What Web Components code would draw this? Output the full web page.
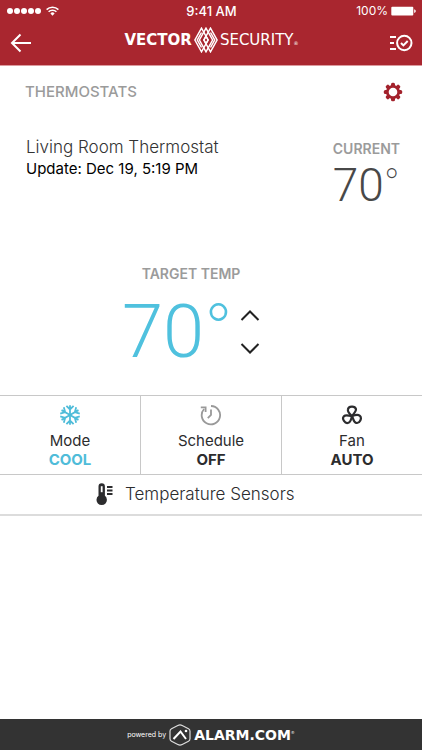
<!DOCTYPE html>
<html lang="en">
<head>
<meta charset="utf-8">
<meta name="viewport" content="width=device-width, initial-scale=1">
<title>Thermostats</title>
<style>
body { margin: 0; background: #fff; color: #2c2c2e; font-family: Inter, "Liberation Sans", sans-serif; }
</style>
</head>
<body>
<thermostat-app></thermostat-app>
<script>
const RESET = `
  :host, *, *::before, *::after { box-sizing: border-box; }
  svg { display: block; flex: none; }
  button, a { font: inherit; color: inherit; background: none; border: 0; padding: 0; margin: 0; text-decoration: none; cursor: pointer; }
`;
function define(name, html) {
  const template = document.createElement('template');
  template.innerHTML = html;
  customElements.define(name, class extends HTMLElement {
    constructor() {
      super();
      this.attachShadow({ mode: 'open' }).append(template.content.cloneNode(true));
    }
  });
}

define('status-bar', `
<style>${RESET}
  :host { display: grid; grid-template-columns: 1fr auto 1fr; align-items: center; height: 22px; padding: 0 6px 0 7px; color: #fff; font-size: 12px; line-height: 16px; }
  .side { display: flex; align-items: center; gap: 4px; }
  .right { justify-content: flex-end; gap: 3px; }
  b { font-size: 13px; font-weight: 500; }
</style>
<div class="side">
  <svg width="35" height="8" viewBox="0 0 35 8" fill="#fff"><circle cx="3" cy="4" r="3"/><circle cx="10" cy="4" r="3"/><circle cx="17" cy="4" r="3"/><circle cx="24" cy="4" r="3"/><circle cx="31" cy="4" r="3"/></svg>
  <svg width="13" height="10" viewBox="0 0 13 10" fill="none" stroke="#fff" stroke-width="1.5"><path d="M.6 3.6a8.3 8.3 0 0 1 11.8 0M2.6 5.8a5.5 5.5 0 0 1 7.8 0"/><path d="M4.4 7.4a3 3 0 0 1 4.2 0L6.5 9.7z" fill="#fff" stroke="none"/></svg>
</div>
<b>9:41 AM</b>
<div class="side right"><span>100%</span>
  <svg width="25" height="10" viewBox="0 0 25 10" fill="#fff"><rect x=".3" y=".8" width="22" height="8.6" rx="1"/><path d="M23.2 3.2q1.6.4 1.6 1.9t-1.6 1.9z"/></svg>
</div>`);

define('brand-logo', `
<style>${RESET}
  :host { display: flex; align-items: center; gap: 1px; color: #fff; font: 15px/16px "DejaVu Sans", sans-serif; white-space: nowrap; }
  b { font-weight: 700; }
  sup { font-size: 5px; line-height: 5px; vertical-align: baseline; }
</style>
<b>VECTOR</b>
<svg width="26" height="26" viewBox="0 0 26 26" fill="none" stroke="#fff" stroke-width="1.5"><path d="M8.5 1.2 1.9 13l6.6 11.800L15.100 13z"/><path d="M13 1.2 6.400 13 13 24.800 19.600 13z"/><path d="M17.500 1.200 10.900 13l6.600 11.800L24.100 13z"/><path d="M8.500 5.500 4.300 13l4.200 7.500M17.500 5.500l4.200 7.500-4.200 7.500M13 9.200 10.900 13l2.100 3.800 2.100-3.800z"/></svg>
<span>SECURITY<sup>®</sup></span>`);

define('nav-bar', `
<style>${RESET}
  :host { display: grid; grid-template-columns: 1fr auto 1fr; align-items: start; height: 43px; padding: 5px 9px 0 10px; }
  .act { display: flex; align-items: center; height: 32px; }
  .end { justify-self: end; }
</style>
<button class="act" aria-label="Back"><svg width="22" height="20" viewBox="0 0 22 20" fill="none" stroke="#fff" stroke-width="2"><path d="M10.500 1.500 2 10l8.500 8.500M2 10h19"/></svg></button>
<brand-logo></brand-logo>
<button class="act end" aria-label="Activity"><svg width="24" height="18" viewBox="0 0 24 18" fill="none" stroke="#fff" stroke-width="2"><circle cx="15.300" cy="9" r="7.200"/><path d="m12 9 2.400 2.400 4.300-4.400"/><path d="M1 3h6M1 9h4M1 15h6"/></svg></button>`);

define('section-label', `
<style>
  :host { display: block; color: #9b9b9b; font-size: 14px; line-height: 20px; font-weight: 600; }
  :host([heading]) { font-size: 15px; font-weight: 500; }
</style><slot></slot>`);

define('temp-reading', `
<style>
  :host { display: flex; align-items: flex-start; font-family: Roboto, sans-serif; font-weight: 300; font-size: 46px; line-height: 46px; color: #484848; }
  .deg { font-size: 42px; line-height: 46px; font-weight: 100; }
  :host([large]) { font-size: 74px; line-height: 76px; color: #4fc1de; }
  :host([large]) .deg { font-size: 76px; line-height: 76px; font-weight: 200; }
</style>
<span><slot></slot></span><span class="deg">°</span>`);

define('thermostat-panel', `
<style>${RESET}
  :host { display: block; }
  header { display: flex; justify-content: space-between; align-items: center; padding: 14px 19px 0 25px; }
  h1, h2, p { margin: 0; font-weight: 400; }
  .gear { display: flex; }
  .info { display: flex; justify-content: space-between; align-items: flex-start; padding: 32px 22px 0 26px; color: #3a3a3c; }
  h2 { font-size: 17px; line-height: 22px; font-weight: 350; color: #333; }
  p { font-size: 15px; line-height: 22px; color: #000; }
  .cur { display: grid; gap: 3px; padding-top: 3px; }
  .target { display: grid; justify-items: center; padding: 56px 40px 0 0; }
  .set { display: flex; align-items: center; gap: 7px; padding: 10px 0 25px; }
  .steps { display: grid; gap: 20px; }
  .steps button { display: flex; }
</style>
<header><h1><section-label heading>THERMOSTATS</section-label></h1>
<button class="gear" aria-label="Settings"><svg width="20" height="24" viewBox="0 0 20 24"><g fill="#a3222c"><circle cx="10" cy="12" r="7"/><rect x="8" y="2.800" width="4" height="18.400" rx="1.500"/><rect x=".8" y="10" width="18.400" height="4" rx="1.500"/><g transform="rotate(45 10 12)"><rect x="8" y="2.800" width="4" height="18.400" rx="1.500"/><rect x=".8" y="10" width="18.400" height="4" rx="1.500"/></g></g><circle cx="10" cy="12" r="4.300" fill="#fff"/></svg></button></header>
<div class="info"><div><h2>Living Room Thermostat</h2><p>Update: Dec 19, 5:19 PM</p></div>
<div class="cur"><section-label>CURRENT</section-label><temp-reading>70</temp-reading></div></div>
<div class="target"><section-label>TARGET TEMP</section-label>
<div class="set"><temp-reading large>70</temp-reading>
<div class="steps">
<button aria-label="Raise target"><svg width="20" height="13" viewBox="0 0 20 13" fill="none" stroke="#222" stroke-width="2"><path d="m1.500 11 8.500-8.500 8.500 8.500"/></svg></button>
<button aria-label="Lower target"><svg width="20" height="13" viewBox="0 0 20 13" fill="none" stroke="#222" stroke-width="2"><path d="m1.500 2 8.500 8.500L18.500 2"/></svg></button>
</div></div></div>`);

define('mode-button', `
<style>${RESET}
  :host { display: block; flex: 1 1 0; }
  :host(:not(:first-of-type)) { border-left: 1px solid #c8c8c8; }
  button { display: flex; flex-direction: column; align-items: center; width: 100%; padding: 8px 0 5px; font-size: 15px; line-height: 19px; }
  .icon { display: flex; align-items: center; height: 22px; margin-bottom: 5px; }
  b { font-weight: 700; }
  :host([active]) b { color: #4fbcd9; }
</style>
<button><span class="icon"><slot name="icon"></slot></span><slot></slot><b><slot name="value"></slot></b></button>`);

const flakeArm = 'M0 0v-9.800M-3.600-9.200 0-5.600 3.600-9.200';
const fanBlade = 'M11 12C8.500 9.800 6.400 7.800 6.900 5.500c.6-3.600 6.900-4 8 -.6.700 2.600-2.100 4.300-3.900 7.100z';
define('mode-controls', `
<style>${RESET}
  :host { display: block; }
  .row { display: flex; border: solid #c8c8c8; border-width: 1px 0; }
  .sensors { display: flex; align-items: center; gap: 12px; height: 41px; padding: 0 0 1px 96px; border-bottom: 2px solid #dcdcdc; font-size: 17px; line-height: 20px; font-weight: 350; }
</style>
<div class="row">
<mode-button active><svg slot="icon" width="22" height="22" viewBox="-11 -11 22 22" fill="none" stroke="#4fbcd9" stroke-width="1.800">${[0, 60, 120, 180, 240, 300].map(a => `<path transform="rotate(${a})" d="${flakeArm}"/>`).join('')}</svg>Mode<span slot="value">COOL</span></mode-button>
<mode-button><svg slot="icon" width="22" height="22" viewBox="0 0 22 22" fill="none" stroke="#999" stroke-width="1.800"><path d="M11 2a9.200 9.200 0 1 1-6.900 3"/><path d="M.8 3.300h4.800v4.800M11 5.500V11l-3.200 3.200"/></svg>Schedule<span slot="value">OFF</span></mode-button>
<mode-button><svg slot="icon" width="22" height="22" viewBox="0 0 22 22" fill="none" stroke="#2c2c2e" stroke-width="2.200">${[0, 120, 240].map(a => `<path transform="rotate(${a} 11 12)" d="${fanBlade}"/>`).join('')}</svg>Fan<span slot="value">AUTO</span></mode-button>
</div>
<a class="sensors" href="#sensors"><svg width="17" height="23" viewBox="0 0 17 23"><path fill="#2c2c2e" d="M2.500 3.500a3.200 3.200 0 0 1 6.400 0v9.300a5.200 5.200 0 1 1-6.400 0z"/><path stroke="#fff" stroke-width="1.800" d="M5.700 3.200v6"/><path stroke="#2c2c2e" stroke-width="1.800" d="M11 4h5.500M11 7.500h5.500M11 11h5.500"/></svg>Temperature Sensors</a>`);

define('powered-by', `
<style>${RESET}
  :host { display: flex; justify-content: center; align-items: center; gap: 2px; height: 31px; background: #333; color: #fff; font: 14px/16px "DejaVu Sans", sans-serif; white-space: nowrap; }
  sup { font-size: 4px; font-weight: 400; line-height: 4px; }
  small { font: 7px/12px Inter, sans-serif; }
</style>
<small>powered by</small>
<svg width="24" height="22" viewBox="0 0 24 22" fill="none"><path stroke="#ddd" stroke-width="1.200" stroke-linejoin="round" d="M9.800 1.500q2.200-1.100 4.400 0l6.300 3.200q1.500.8 1.500 2.500v7.600q0 1.700-1.500 2.500l-6.300 3.200q-2.200 1.100-4.400 0L3.500 17.300Q2 16.500 2 14.800V7.200q0-1.700 1.500-2.500z"/><path stroke="#fff" stroke-width="2" d="m5.500 15 7-7.500 5.500 7.500"/><circle cx="18" cy="7" r="1.300" fill="#fff"/></svg>
<b>ALARM.COM<sup>®</sup></b>`);

define('thermostat-app', `
<style>
  :host { display: flex; flex-direction: column; min-height: 100vh; }
  .top { background: #a9262f; border-bottom: 1px solid #dc9a9e; }
  main { flex: 1; }
</style>
<div class="top"><status-bar></status-bar><nav-bar></nav-bar></div>
<main><thermostat-panel></thermostat-panel><mode-controls></mode-controls></main>
<powered-by></powered-by>`);
</script>
</body>
</html>
